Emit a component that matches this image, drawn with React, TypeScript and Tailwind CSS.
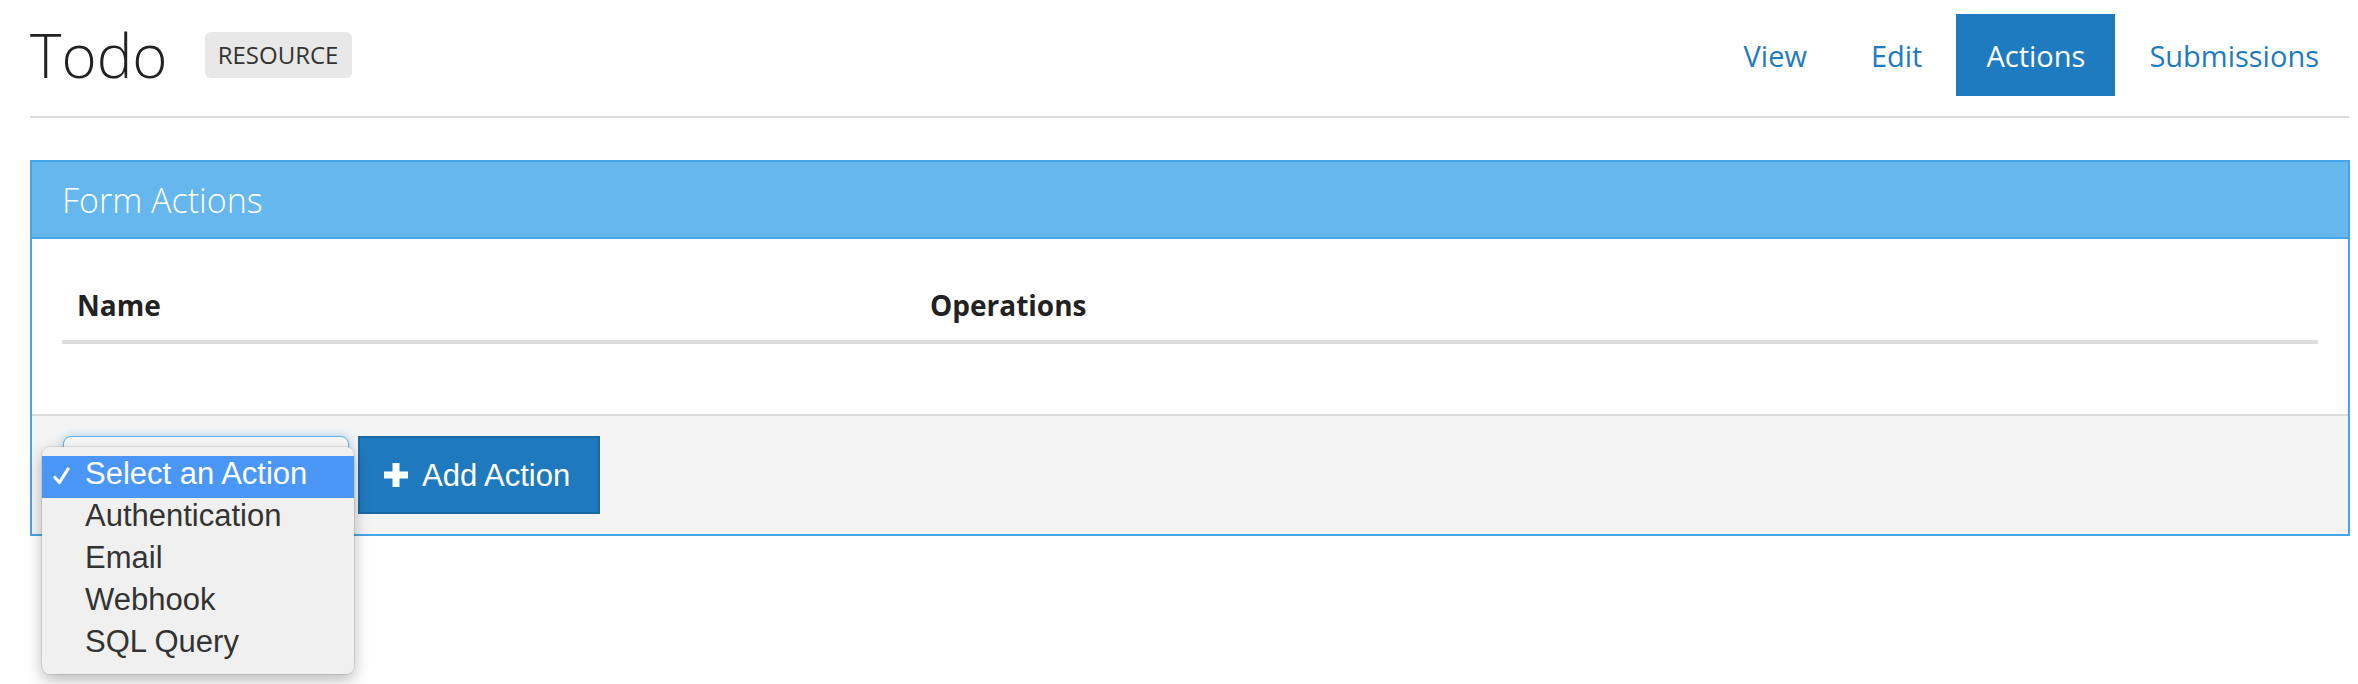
import React from "react";

const tabs = [
  { label: "View" },
  { label: "Edit" },
  { label: "Actions", active: true },
  { label: "Submissions" },
];

const options = ["Select an Action", "Authentication", "Email", "Webhook", "SQL Query"];

const PlusIcon = () => (
  <svg width="24" height="24" viewBox="0 0 24 24" className="shrink-0">
    <path d="M8.5 0h7v8.5H24v7h-8.5V24h-7v-8.5H0v-7h8.5z" fill="#fff" />
  </svg>
);

const CheckIcon = () => (
  <svg width="17" height="18" viewBox="0 0 17 18">
    <path d="M2 10.5l4.5 5L15 2" fill="none" stroke="#fff" strokeWidth="3.2" strokeLinecap="round" strokeLinejoin="round" />
  </svg>
);

const App: React.FC = () => {
  return (
    <div className="min-h-screen bg-white font-['Open_Sans',sans-serif] text-[#222]">
      <div className="ml-[30px] w-[2320px]">
        <header className="pt-[14px]">
          <div className="flex h-[82px] items-center justify-between">
            <div className="flex items-center gap-[37px]">
              <h1 className="text-[60px] font-light leading-none text-[#222]">Todo</h1>
              <span className="flex h-[46px] w-[147px] items-center justify-center rounded-[6px] bg-[#e8e8e8] text-[24px] leading-none text-[#333]">
                RESOURCE
              </span>
            </div>
            <nav className="mr-[1px] flex h-full gap-[4px]">
              {tabs.map((t) => (
                <a
                  key={t.label}
                  className={`flex h-full items-center px-[30px] text-[29px] leading-none ${
                    t.active ? "bg-[#1f7bbf] text-white" : "text-[#1f7bbf]"
                  }`}
                >
                  {t.label}
                </a>
              ))}
            </nav>
          </div>
          <div className="mr-[1px] mt-[20px] h-[2px] bg-[#dddddd]" />
        </header>

        <section className="mt-[42px] border-2 border-[#45a7e8]">
          <div className="flex h-[77px] items-center border-b-2 border-[#45a7e8] bg-[#65b7ed] pl-[30px]">
            <h3 className="text-[34px] font-light leading-none text-white">Form Actions</h3>
          </div>

          <div className="h-[175px] bg-white px-[30px] pt-[52px]">
            <div className="flex border-b-4 border-[#dddddd] pb-[21px] text-[28px] font-bold leading-none text-[#222]">
              <div className="w-[853px] pl-[15px]">Name</div>
              <div className="pl-[15px]">Operations</div>
            </div>
          </div>

          <div className="flex h-[120px] items-center gap-[9px] border-t-2 border-[#dddddd] bg-[#f4f4f4] pl-[31px]">
            <div className="relative h-[78px] w-[286px]">
              <div className="h-full w-full rounded-[8px] border border-[#66afe9] bg-[#f7f7f7] shadow-[0_0_8px_rgba(102,175,233,0.6)]" />
              <div className="absolute left-[-21px] top-[11px] z-10 h-[227px] w-[312px] rounded-[8px] bg-[#f0f0f0] pt-[9px] font-['Liberation_Sans',Arial,sans-serif] shadow-[0_0_0_1px_rgba(0,0,0,0.08),0_6px_16px_rgba(0,0,0,0.28)]">
                {options.map((o, i) => (
                  <div
                    key={o}
                    className={`flex h-[42px] items-center pb-[8px] pl-[11px] text-[31px] leading-none ${
                      i === 0 ? "bg-[#4a97f8] text-white" : "text-[#333]"
                    }`}
                  >
                    <span className="flex w-[32px] items-center pt-[6px]">{i === 0 ? <CheckIcon /> : null}</span>
                    {o}
                  </div>
                ))}
              </div>
            </div>
            <button className="flex h-[78px] w-[242px] items-center gap-[14px] border-2 border-[#1a69a5] bg-[#1f79be] pl-[24px] font-['Liberation_Sans',Arial,sans-serif] text-[31px] leading-none text-white">
              <PlusIcon />
              Add Action
            </button>
          </div>
        </section>
      </div>
    </div>
  );
};

export default App;
